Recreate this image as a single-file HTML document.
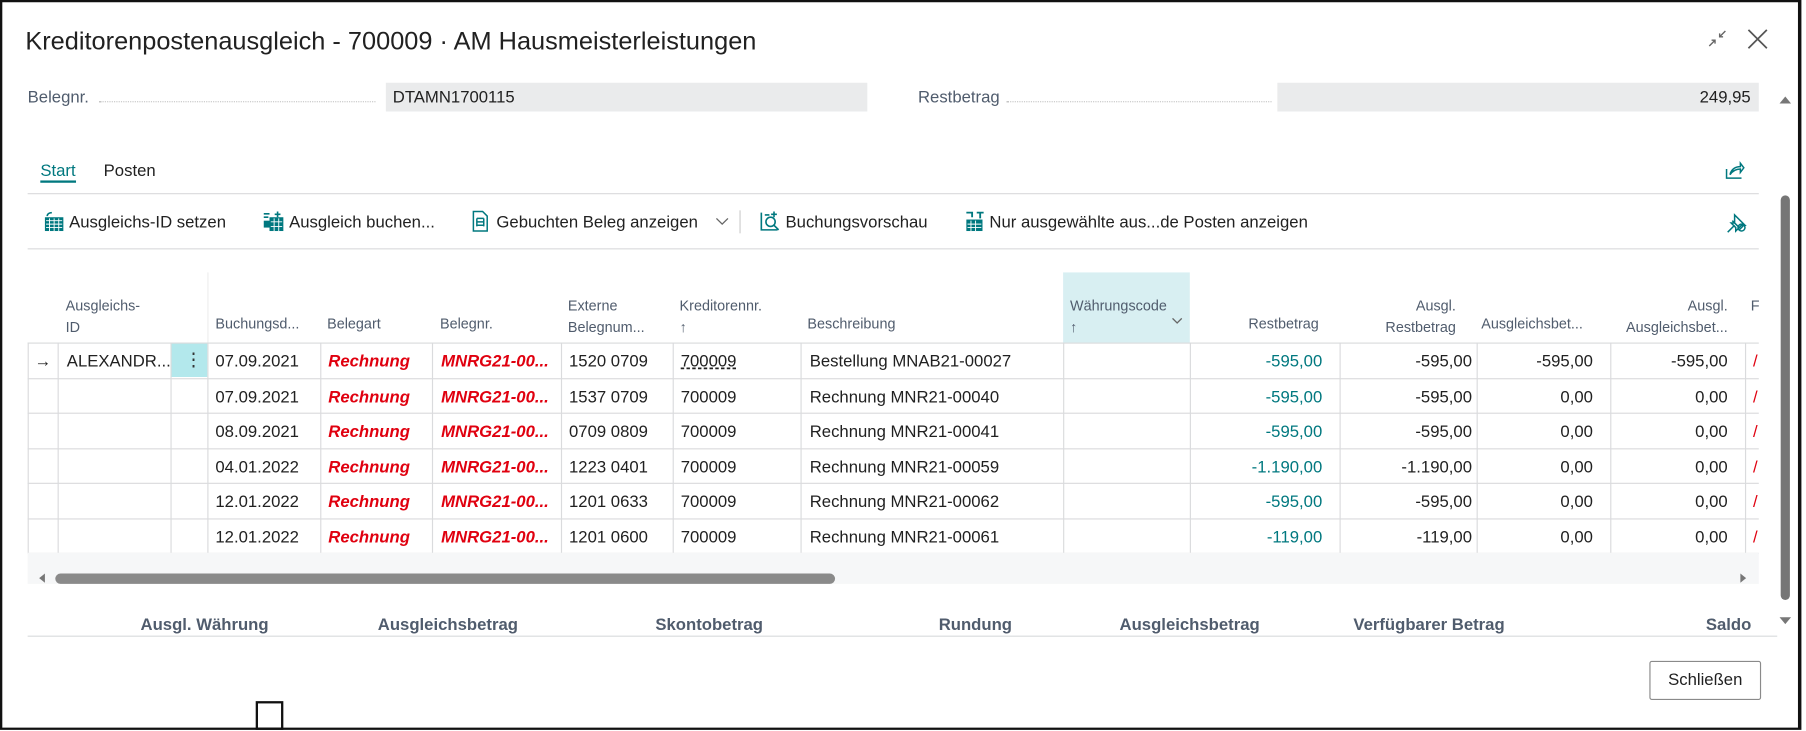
<!DOCTYPE html>
<html><head><meta charset="utf-8"><style>
html,body{margin:0;padding:0;width:1806px;height:731px;overflow:hidden;background:#fff}
#w{position:absolute;left:0;top:0;width:1568px;height:636px;transform:scale(1.1518,1.1494);transform-origin:0 0;font-family:"Liberation Sans",sans-serif;color:#212121}
.a{position:absolute;white-space:nowrap}
.hd{font-size:12.5px;color:#505c6d;line-height:19px}
.c{font-size:14.5px;line-height:30px}
.red{color:#e0000f;font-weight:bold;font-style:italic}
.tl{color:#00787f}
.vl{position:absolute;width:1px;background:#dadbdd}
.hl{position:absolute;height:1px;background:#dadbdd}
.ft{font-size:14.5px;font-weight:bold;color:#505c6d}
.dots{position:absolute;border-bottom:1px dotted #c5c5c5;height:0}
</style></head><body><div id="w">
<div class="a" style="left:0;top:0;width:1559px;height:631px;border:2px solid #111;border-right-width:3px"></div>
<div class="a" style="left:22px;top:23px;font-size:22px;color:#212121">Kreditorenpostenausgleich - 700009 · AM Hausmeisterleistungen</div>
<svg class="a" style="left:1481px;top:24px" width="20" height="20" viewBox="0 0 20 20" fill="none" stroke="#666" stroke-width="1.2"><path d="M3 16l5-5M5 11h3v3M17 3l-5 5M12 5v3h3"/></svg>
<svg class="a" style="left:1515px;top:23px" width="22" height="22" viewBox="0 0 22 22" stroke="#555" stroke-width="1.5"><path d="M3 3l16 16M19 3L3 19"/></svg>
<div class="a" style="left:24px;top:77px;font-size:14.5px;color:#505c6d">Belegnr.</div>
<div class="dots" style="left:86px;top:88px;width:240px"></div>
<div class="a" style="left:335px;top:72px;width:418px;height:25px;background:#eaebec"></div>
<div class="a" style="left:341px;top:77px;font-size:14.5px">DTAMN1700115</div>
<div class="a" style="left:797px;top:77px;font-size:14.5px;color:#505c6d">Restbetrag</div>
<div class="dots" style="left:874px;top:88px;width:230px"></div>
<div class="a" style="left:1109px;top:72px;width:418px;height:25px;background:#eaebec"></div>
<div class="a" style="left:1470px;top:77px;width:50px;text-align:right;font-size:14.5px">249,95</div>
<div class="a" style="left:1545px;top:84px;width:0;height:0;border-left:5px solid transparent;border-right:5px solid transparent;border-bottom:6px solid #777"></div>
<div class="a" style="left:1546px;top:170px;width:8px;height:352px;background:#767676;border-radius:4px"></div>
<div class="a" style="left:1545px;top:537px;width:0;height:0;border-left:5px solid transparent;border-right:5px solid transparent;border-top:6px solid #777"></div>
<div class="a" style="left:35px;top:141px;font-size:14.5px;color:#00787f">Start</div>
<div class="a" style="left:35px;top:157px;width:31px;height:2px;background:#00787f"></div>
<div class="a" style="left:90px;top:141px;font-size:14.5px">Posten</div>
<svg class="a" style="left:1497px;top:139px" width="18" height="18" viewBox="0 0 18 18" fill="none" stroke="#00787f" stroke-width="1.3"><path d="M2 8v8h13M5 13c1-5 5-7 9-7V3l3 4-3 4V8c-4 0-7 2-9 5z"/></svg>
<div class="hl" style="left:24px;top:168px;width:1503px"></div>
<svg class="a" style="left:38px;top:184px" width="18" height="18" viewBox="0 0 18 18"><rect x="1" y="5" width="16" height="12" fill="#00787f"/><path d="M2 8h14M2 11h14M2 14h14M5 6v11M9 6v11M13 6v11" stroke="#fff" stroke-width="0.8"/><path d="M3 4c0-2 2-3 4-3" stroke="#00787f" fill="none" stroke-width="1.4"/></svg>
<div class="a" style="left:60px;top:186px;font-size:14.5px">Ausgleichs-ID setzen</div>
<svg class="a" style="left:228px;top:184px" width="19" height="18" viewBox="0 0 19 18"><rect x="6" y="5" width="12" height="12" fill="#00787f"/><path d="M7 9h10M7 13h10M10 6v11M14 6v11" stroke="#fff" stroke-width="0.8"/><path d="M1 2h5M1 5h4M13 0v5M10.5 2.5h5" stroke="#00787f" stroke-width="1.4"/><rect x="1" y="8" width="6" height="6" fill="#00787f"/></svg>
<div class="a" style="left:251px;top:186px;font-size:14.5px">Ausgleich buchen...</div>
<svg class="a" style="left:409px;top:183px" width="16" height="19" viewBox="0 0 16 19" fill="none" stroke="#00787f" stroke-width="1.3"><path d="M2 1h8l4 4v13H2z"/><path d="M5 7h6M5 10h6M5 13h6M5 7v7M11 7v7"/></svg>
<div class="a" style="left:431px;top:186px;font-size:14.5px">Gebuchten Beleg anzeigen</div>
<div class="a" style="left:642px;top:183px;width:1px;height:20px;background:#ccc"></div>
<svg class="a" style="left:620px;top:188px" width="14" height="10" viewBox="0 0 14 10" fill="none" stroke="#666" stroke-width="1.1"><path d="M2 2l5 5 5-5"/></svg>
<svg class="a" style="left:659px;top:183px" width="19" height="19" viewBox="0 0 19 19" fill="none" stroke="#00787f" stroke-width="1.4"><path d="M2 2v15h14"/><circle cx="10" cy="10" r="4"/><path d="M13 13l4 4M5 4h4M13 1v5M10.5 3.5h5"/></svg>
<div class="a" style="left:682px;top:186px;font-size:14.5px">Buchungsvorschau</div>
<svg class="a" style="left:837px;top:183px" width="19" height="19" viewBox="0 0 19 19"><rect x="2" y="8" width="14" height="10" fill="#00787f"/><path d="M3 12h12M3 15h12M6 9v9M10 9v9" stroke="#fff" stroke-width="0.8"/><path d="M2 2h5v4M11 2h6M14 2v5" stroke="#00787f" stroke-width="1.6" fill="none"/></svg>
<div class="a" style="left:859px;top:186px;font-size:14.5px">Nur ausgewählte aus...de Posten anzeigen</div>
<svg class="a" style="left:1498px;top:184px" width="20" height="20" viewBox="0 0 20 20" fill="none" stroke="#00787f" stroke-width="1.3"><path d="M2 18l6-6M6 8l6 6M8 3l9 9-3 0-5 5 0-3-4-4 3 0z"/><circle cx="14" cy="14" r="3"/><path d="M12 16l4-4"/></svg>
<div class="hl" style="left:24px;top:216px;width:1503px"></div>
<div class="a" style="left:923px;top:237px;width:110px;height:61px;background:#d8eff2"></div>
<div class="vl" style="left:180px;top:237px;height:61px;background:#eee"></div>
<div class="a hd" style="left:57px;top:257px">Ausgleichs-<br>ID</div>
<div class="a hd" style="left:187px;top:273px">Buchungsd...</div>
<div class="a hd" style="left:284px;top:273px">Belegart</div>
<div class="a hd" style="left:382px;top:273px">Belegnr.</div>
<div class="a hd" style="left:493px;top:257px">Externe<br>Belegnum...</div>
<div class="a hd" style="left:590px;top:257px">Kreditorennr.<br>↑</div>
<div class="a hd" style="left:701px;top:273px">Beschreibung</div>
<div class="a hd" style="left:929px;top:257px">Währungscode<br>↑</div>
<svg class="a" style="left:1017px;top:276px" width="10" height="8" viewBox="0 0 10 8" fill="none" stroke="#666" stroke-width="1.1"><path d="M1 1l4 4 4-4"/></svg>
<div class="a hd" style="left:1045px;top:273px;width:100px;text-align:right">Restbetrag</div>
<div class="a hd" style="left:1165px;top:257px;width:99px;text-align:right">Ausgl.<br>Restbetrag</div>
<div class="a hd" style="left:1286px;top:273px">Ausgleichsbet...</div>
<div class="a hd" style="left:1400px;top:257px;width:100px;text-align:right">Ausgl.<br>Ausgleichsbet...</div>
<div class="a hd" style="left:1520px;top:257px">F</div>
<div class="a" style="left:148px;top:298px;width:32px;height:30px;background:#b3e8ec"></div>
<div class="a" style="left:160px;top:304px;font-size:16px;color:#333;line-height:20px">⋮</div>
<div id="rows"></div>
<div class="a" style="left:24px;top:481px;width:1503px;height:27px;background:#f6f7f8"></div>
<div class="a" style="left:34px;top:499px;width:0;height:0;border-top:4px solid transparent;border-bottom:4px solid transparent;border-right:5px solid #777"></div>
<div class="a" style="left:48px;top:499px;width:677px;height:9px;background:#8a8a8a;border-radius:5px"></div>
<div class="a" style="left:1511px;top:499px;width:0;height:0;border-top:4px solid transparent;border-bottom:4px solid transparent;border-left:5px solid #777"></div>
<div class="a ft" style="left:122px;top:536px">Ausgl. Währung</div>
<div class="a ft" style="left:328px;top:536px">Ausgleichsbetrag</div>
<div class="a ft" style="left:569px;top:536px">Skontobetrag</div>
<div class="a ft" style="left:815px;top:536px">Rundung</div>
<div class="a ft" style="left:972px;top:536px">Ausgleichsbetrag</div>
<div class="a ft" style="left:1175px;top:536px">Verfügbarer Betrag</div>
<div class="a ft" style="left:1481px;top:536px">Saldo</div>
<div class="hl" style="left:24px;top:553px;width:1519px"></div>
<div class="a" style="left:1432px;top:575px;width:95px;height:32px;border:1px solid #8a8a8a;border-radius:2px;font-size:14.5px;text-align:center;line-height:32px">Schließen</div>
<div class="a" style="left:222px;top:610px;width:20px;height:21px;border:2px solid #111"></div>
</div>
<script>
var cols=[24,50,148,180,278,375,487,584,695,923,1033,1163,1282,1398,1515,1527];
var data=[["07.09.2021","1520 0709","Bestellung MNAB21-00027","-595,00","-595,00","-595,00","-595,00"],
["07.09.2021","1537 0709","Rechnung MNR21-00040","-595,00","-595,00","0,00","0,00"],
["08.09.2021","0709 0809","Rechnung MNR21-00041","-595,00","-595,00","0,00","0,00"],
["04.01.2022","1223 0401","Rechnung MNR21-00059","-1.190,00","-1.190,00","0,00","0,00"],
["12.01.2022","1201 0633","Rechnung MNR21-00062","-595,00","-595,00","0,00","0,00"],
["12.01.2022","1201 0600","Rechnung MNR21-00061","-119,00","-119,00","0,00","0,00"]];
var h="",ys=[298,328.5,359,389.5,420,450.5,481];
for(var i=0;i<7;i++)h+='<div class="hl" style="left:24px;top:'+ys[i]+'px;width:1503px"></div>';
for(var j=0;j<cols.length-1;j++)h+='<div class="vl" style="left:'+cols[j]+'px;top:298px;height:183px"></div>';
for(i=0;i<6;i++){var y=ys[i]+2,d=data[i];
if(i==0){h+='<div class="a c" style="left:30px;top:'+y+'px">→</div><div class="a c" style="left:58px;top:'+y+'px">ALEXANDR...</div>';}
h+='<div class="a c" style="left:187px;top:'+y+'px">'+d[0]+'</div>';
h+='<div class="a c red" style="left:285px;top:'+y+'px">Rechnung</div>';
h+='<div class="a c red" style="left:383px;top:'+y+'px">MNRG21-00...</div>';
h+='<div class="a c" style="left:494px;top:'+y+'px">'+d[1]+'</div>';
h+='<div class="a c" style="left:591px;top:'+y+'px;'+(i==0?'text-decoration:underline dashed;':'')+'">700009</div>';
h+='<div class="a c" style="left:703px;top:'+y+'px">'+d[2]+'</div>';
h+='<div class="a c tl" style="left:1040px;width:108px;text-align:right;top:'+y+'px">'+d[3]+'</div>';
h+='<div class="a c" style="left:1170px;width:108px;text-align:right;top:'+y+'px">'+d[4]+'</div>';
h+='<div class="a c" style="left:1280px;width:103px;text-align:right;top:'+y+'px">'+d[5]+'</div>';
h+='<div class="a c" style="left:1395px;width:105px;text-align:right;top:'+y+'px">'+d[6]+'</div>';
h+='<div class="a c" style="left:1522px;top:'+y+'px;color:#e0000f">/</div>';}
document.getElementById('rows').innerHTML=h;
</script>
</body></html>
